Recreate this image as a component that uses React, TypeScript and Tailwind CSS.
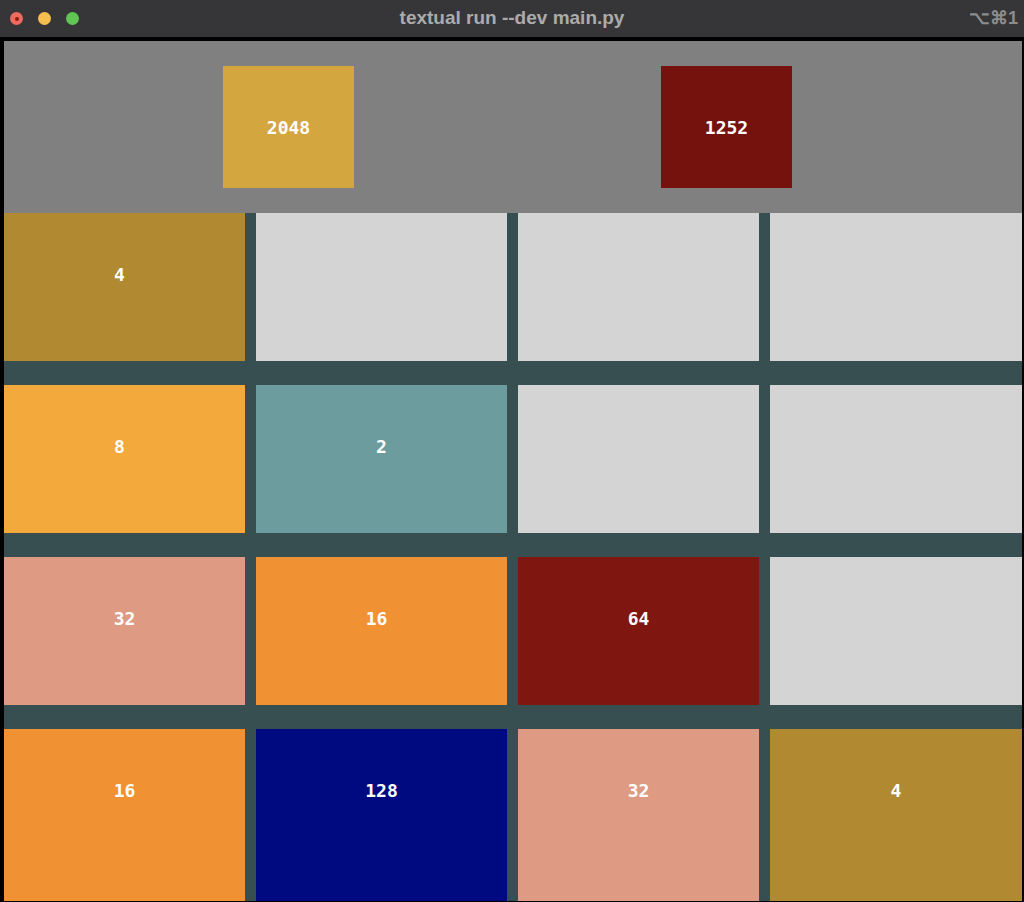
type Tile = { v?: string; bg: string; dx?: number };

const rows: Tile[][] = [
  [{ v: "4", bg: "bg-[#b08930]", dx: -5 }, { bg: "bg-[#d4d4d4]" }, { bg: "bg-[#d4d4d4]" }, { bg: "bg-[#d4d4d4]" }],
  [{ v: "8", bg: "bg-[#f3a93c]", dx: -5 }, { v: "2", bg: "bg-[#6c9c9d]" }, { bg: "bg-[#d4d4d4]" }, { bg: "bg-[#d4d4d4]" }],
  [{ v: "32", bg: "bg-[#de9a82]" }, { v: "16", bg: "bg-[#f09234]", dx: -5 }, { v: "64", bg: "bg-[#7f1610]" }, { bg: "bg-[#d4d4d4]" }],
  [{ v: "16", bg: "bg-[#f09234]" }, { v: "128", bg: "bg-[#000a80]" }, { v: "32", bg: "bg-[#de9a82]" }, { v: "4", bg: "bg-[#b08930]" }],
];

function Cell({ t }: { t: Tile }) {
  return (
    <div className={`${t.bg} flex justify-center pt-[50px]`}>
      {t.v && (
        <span
          className="text-white font-bold text-[18px] leading-[24px] h-6"
          style={t.dx ? { transform: `translateX(${t.dx}px)` } : undefined}
        >
          {t.v}
        </span>
      )}
    </div>
  );
}

export default function App() {
  return (
    <div className="w-[1024px] h-[902px] overflow-hidden bg-black flex flex-col">
      {/* window title bar */}
      <div className="h-[37px] bg-[#363638] flex items-center relative shrink-0 font-['Liberation_Sans',sans-serif]">
        <div className="flex items-center gap-[15px] pl-[10px]">
          <div className="w-[13px] h-[13px] rounded-full bg-[#ec6a5e] flex items-center justify-center">
            <div className="w-[4px] h-[4px] rounded-full bg-[#8c1a10]" />
          </div>
          <div className="w-[13px] h-[13px] rounded-full bg-[#f4bf4f]" />
          <div className="w-[13px] h-[13px] rounded-full bg-[#61c554]" />
        </div>
        <div className="absolute inset-x-0 top-0 h-full flex items-center justify-center text-[19px] font-bold text-[#ababab]">
          textual run --dev main.py
        </div>
        <div className="ml-auto pr-[6px] text-[18px] font-bold text-[#8c8c8c]">⌥⌘1</div>
      </div>

      <div className="h-[4px] shrink-0" />

      {/* terminal */}
      <div className="flex-1 pl-[4px] pr-[2px] font-['DejaVu_Sans_Mono',monospace]">
        <div className="h-[172px] bg-[#808080] grid grid-cols-2 items-start pt-[25px]">
          <div className="flex justify-end pr-[159px]">
            <div className="w-[131px] h-[122px] bg-[#d4a640] flex items-center justify-center text-white font-bold text-[18px]">
              2048
            </div>
          </div>
          <div className="flex justify-end pr-[230px]">
            <div className="w-[131px] h-[122px] bg-[#75120e] flex items-center justify-center text-white font-bold text-[18px]">
              1252
            </div>
          </div>
        </div>
        <div className="bg-[#374f51] grid grid-cols-[241px_251px_241px_252px] grid-rows-[148px_148px_148px_172px] gap-x-[11px] gap-y-[24px]">
          {rows.map((r, i) => r.map((t, j) => <Cell key={`${i}-${j}`} t={t} />))}
        </div>
      </div>
    </div>
  );
}
